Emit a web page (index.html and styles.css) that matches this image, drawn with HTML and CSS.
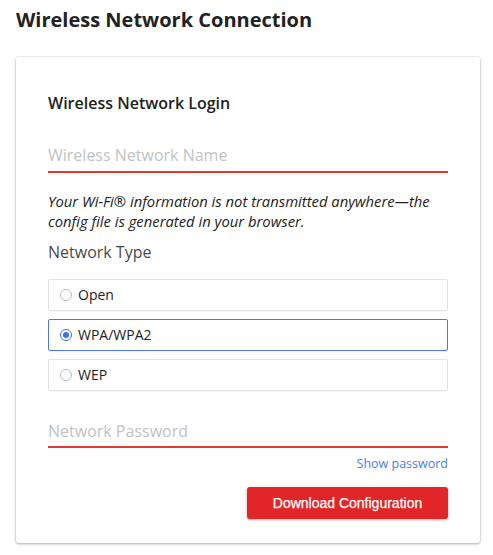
FILE: index.html
```html
<!DOCTYPE html>
<html lang="en">
<head>
<meta charset="utf-8">
<title>Wireless Network Connection</title>
<link rel="stylesheet" href="styles.css">
</head>
<body>
<h1 class="page-title">Wireless Network Connection</h1>
<div class="card">
  <h2 class="card-title">Wireless Network Login</h2>
  <input class="field field-name" type="text" placeholder="Wireless Network Name">
  <p class="note">Your Wi-Fi® information is not transmitted anywhere—the config file is generated in your browser.</p>
  <div class="label">Network Type</div>
  <div class="options">
    <label class="option"><span class="radio"></span><span class="option-text">Open</span></label>
    <label class="option selected"><span class="radio"></span><span class="option-text">WPA/WPA2</span></label>
    <label class="option"><span class="radio"></span><span class="option-text">WEP</span></label>
  </div>
  <input class="field field-pass" type="password" placeholder="Network Password">
  <div class="show-row"><a class="show-link" href="#">Show password</a></div>
  <div class="actions"><button class="btn" type="button">Download Configuration</button></div>
</div>
</body>
</html>
```
FILE: styles.css
```css
* { box-sizing: border-box; }
html, body { background: #fff; }
body {
  margin: 0;
  padding: 6px 13px 12px 16px;
  font-family: "Open Sans", sans-serif;
  color: #222;
}
.page-title {
  margin: 0 0 24px;
  font-size: 20px;
  line-height: 27px;
  font-weight: 700;
  color: #222;
}
.card {
  background: #fff;
  border-radius: 3px;
  box-shadow: 0 0 0 1px rgba(0,0,0,0.05), 0 1px 3px rgba(0,0,0,0.28);
  padding: 35px 32px 24px;
  display: flex;
  flex-direction: column;
}
.card-title {
  margin: 0;
  font-size: 16px;
  line-height: 22px;
  font-weight: 600;
  color: #222;
}
.field {
  display: block;
  width: 100%;
  border: 0;
  border-bottom: 2px solid #e53935;
  outline: none;
  padding: 8px 0 5px;
  font-family: "Open Sans", sans-serif;
  font-size: 16px;
  line-height: 22px;
  height: 37px;
  color: #222;
  background: transparent;
}
.field::placeholder { color: #c2c2c2; }
.field-name { margin-top: 22px; }
.note {
  margin: 18px 0 0;
  font-size: 14.8px;
  line-height: 20px;
  font-style: italic;
  color: #222;
}
.label {
  margin-top: 9px;
  font-size: 16px;
  line-height: 24px;
  font-weight: 400;
  color: #4a4a4a;
}
.options {
  margin-top: 15px;
  display: flex;
  flex-direction: column;
  gap: 8px;
}
.option {
  display: flex;
  align-items: center;
  height: 32px;
  padding-left: 11px;
  border: 1px solid #e2e2e2;
  border-radius: 2px;
  box-shadow: 0 1px 1px rgba(0,0,0,0.04);
  font-size: 14px;
  color: #222;
}
.option.selected { border-color: #4f74e3; }
.radio {
  width: 12px;
  height: 12px;
  border-radius: 50%;
  border: 1px solid #b8b8b8;
  background: #fff;
  margin-right: 6px;
  position: relative;
  flex: none;
}
.selected .radio { border-color: #3f6fe6; }
.selected .radio::after {
  content: "";
  position: absolute;
  left: 2px; top: 2px;
  width: 6px; height: 6px;
  border-radius: 50%;
  background: #3f6fe6;
}
.option-text { line-height: 20px; }
.field-pass { margin-top: 21px; padding-bottom: 4px; height: 36px; }
.show-row {
  margin-top: 7px;
  display: flex;
  justify-content: flex-end;
}
.show-link {
  font-size: 12.5px;
  line-height: 18px;
  color: #4a7ee6;
  text-decoration: none;
}
.actions {
  margin-top: 14px;
  display: flex;
  justify-content: flex-end;
}
.btn {
  width: 201px;
  height: 32px;
  border: 0;
  border-radius: 3px;
  background: #e22528;
  color: #fff;
  font-family: "Liberation Sans", Arial, sans-serif;
  font-size: 14px;
  line-height: 32px;
  padding: 0;
  box-shadow: 0 1px 3px rgba(0,0,0,0.3);
  -webkit-text-stroke: 0.25px #fff;
}
```
